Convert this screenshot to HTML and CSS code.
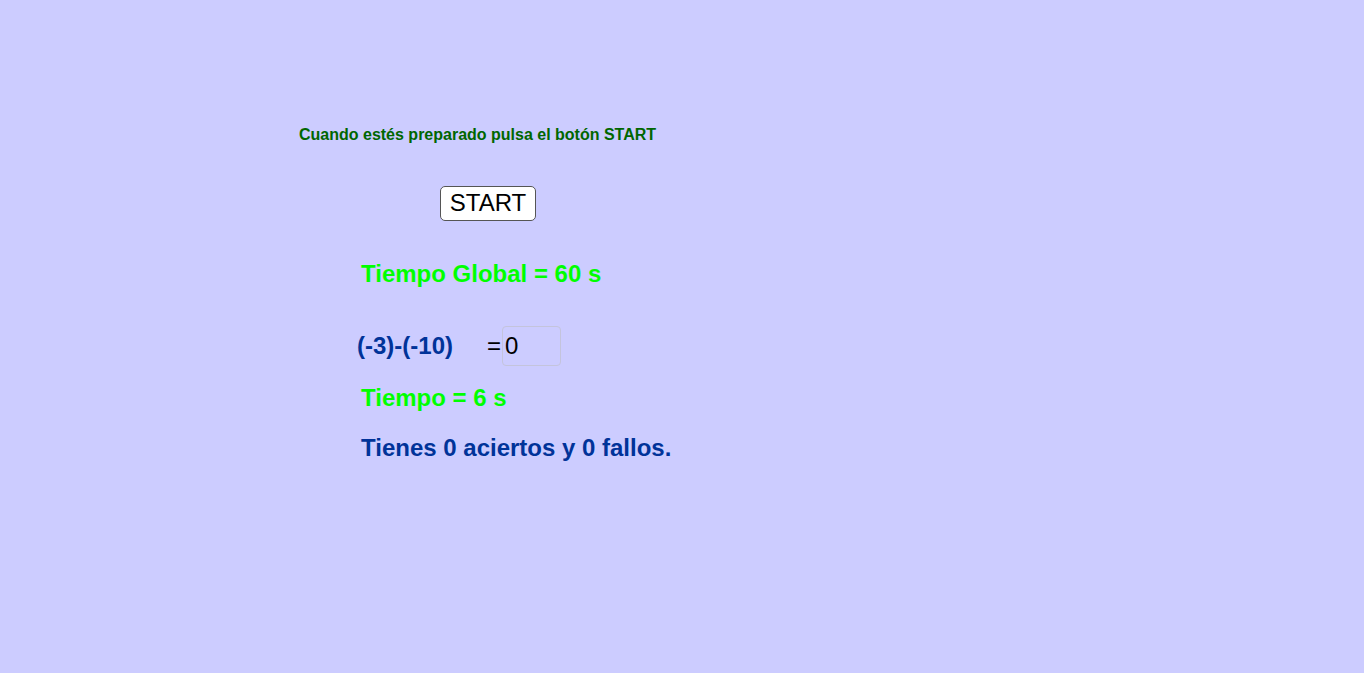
FILE: index.html
```html
<!DOCTYPE html>
<html lang="es">
<head>
<meta charset="utf-8">
<title>Applet</title>
<link rel="stylesheet" href="styles.css">
</head>
<body>
<div class="applet">
  <p class="intro">Cuando estés preparado pulsa el botón START</p>
  <div class="btn-row"><button class="start">START</button></div>
  <p class="timer global">Tiempo Global = 60 s</p>
  <div class="question">
    <span class="expr">(-3)-(-10)</span>
    <span class="eq">=</span>
    <span class="answer">0</span>
  </div>
  <p class="timer local">Tiempo = 6 s</p>
  <p class="score">Tienes 0 aciertos y 0 fallos.</p>
</div>
</body>
</html>
```
FILE: styles.css
```css
html, body {
  margin: 0;
  padding: 0;
  background: #ffffff;
}
.applet {
  width: 1364px;
  height: 673px;
  background: #ccccff;
  font-family: "Liberation Sans", Arial, sans-serif;
  overflow: hidden;
  padding-top: 127px;
  box-sizing: border-box;
}
.applet p {
  margin: 0;
}
.intro {
  margin-left: 299px !important;
  font-size: 16px;
  line-height: 16px;
  font-weight: bold;
  color: #006600;
}
.btn-row {
  margin-top: 43px;
  margin-left: 440px;
  height: 35px;
}
.start {
  display: block;
  box-sizing: border-box;
  width: 96px;
  height: 35px;
  padding: 0 0 2px 0;
  margin: 0;
  background: #ffffff;
  border: 1px solid #555555;
  border-radius: 5px;
  font-family: "Liberation Sans", Arial, sans-serif;
  font-size: 24px;
  line-height: 28px;
  color: #000000;
}
.timer {
  font-size: 24px;
  line-height: 24px;
  font-weight: bold;
  color: #00ff00;
  margin-left: 361px !important;
}
.global {
  margin-top: 41px !important;
}
.question {
  display: flex;
  align-items: center;
  margin-top: 40px;
  margin-left: 357px;
  height: 40px;
}
.expr {
  font-size: 24px;
  font-weight: bold;
  color: #003399;
  width: 130px;
}
.eq {
  font-size: 24px;
  color: #000000;
  width: 15px;
}
.answer {
  box-sizing: border-box;
  width: 59px;
  height: 40px;
  border: 1px solid #c4c4dc;
  border-radius: 4px;
  font-size: 24px;
  line-height: 38px;
  padding-left: 2px;
  color: #000000;
}
.local {
  margin-top: 20px !important;
}
.score {
  margin-left: 361px !important;
  margin-top: 26px !important;
  font-size: 24px;
  line-height: 24px;
  font-weight: bold;
  color: #003399;
}
```
